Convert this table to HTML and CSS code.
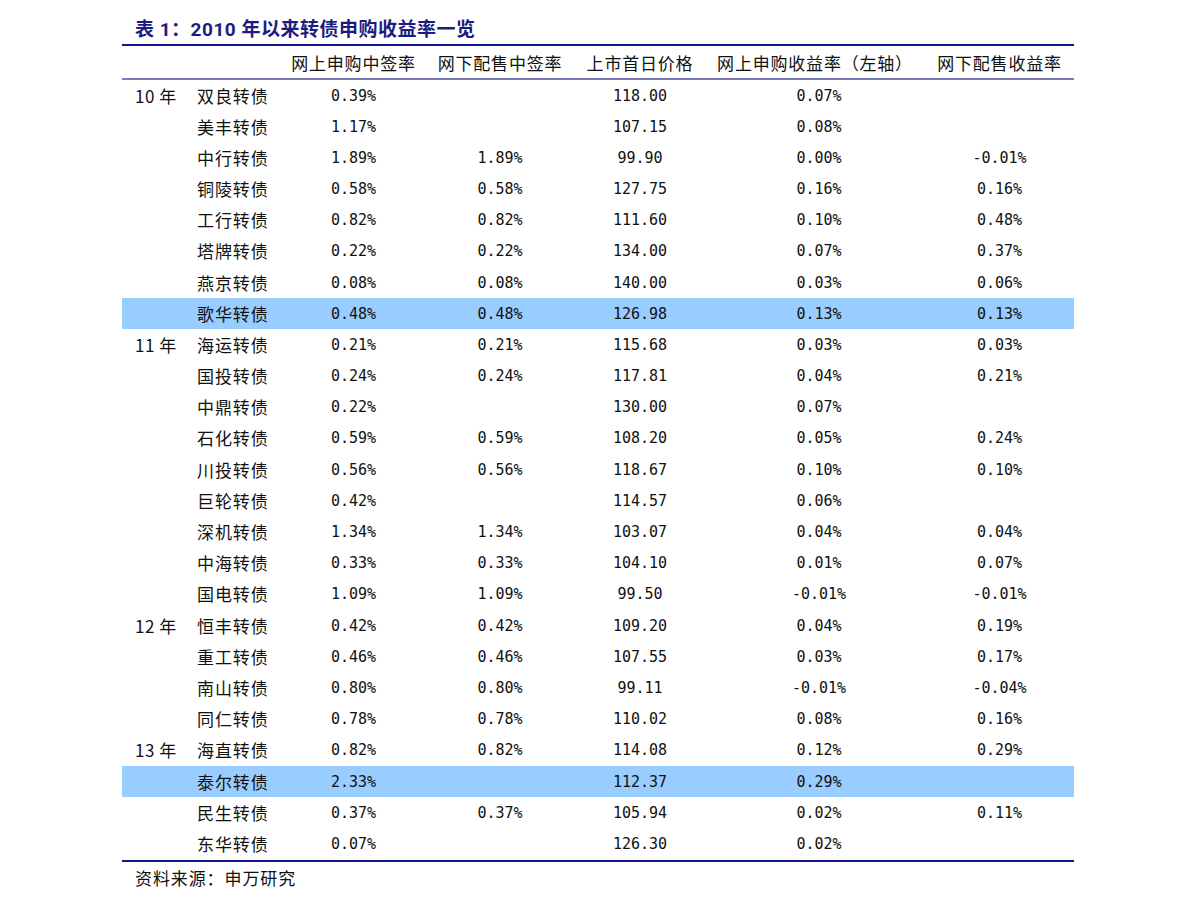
FILE: index.html
```html
<!DOCTYPE html>
<html lang="zh">
<head>
<meta charset="utf-8">
<title>表 1：2010 年以来转债申购收益率一览</title>
<link rel="stylesheet" href="styles.css">
</head>
<body>
<div class="page">
  <div class="title">表 1：2010 年以来转债申购收益率一览</div>
  <table class="data">
    <colgroup>
      <col class="c-year"><col class="c-name"><col class="c-1"><col class="c-2"><col class="c-3"><col class="c-4"><col class="c-5">
    </colgroup>
    <thead>
      <tr>
        <th></th><th></th>
        <th>网上申购中签率</th>
        <th>网下配售中签率</th>
        <th>上市首日价格</th>
        <th>网上申购收益率（左轴）</th>
        <th>网下配售收益率</th>
      </tr>
    </thead>
    <tbody>
      <tr><td class="yr">10 年</td><td class="nm">双良转债</td><td class="num">0.39%</td><td class="num"></td><td class="num">118.00</td><td class="num n4">0.07%</td><td class="num"></td></tr>
      <tr><td class="yr"></td><td class="nm">美丰转债</td><td class="num">1.17%</td><td class="num"></td><td class="num">107.15</td><td class="num n4">0.08%</td><td class="num"></td></tr>
      <tr><td class="yr"></td><td class="nm">中行转债</td><td class="num">1.89%</td><td class="num">1.89%</td><td class="num">99.90</td><td class="num n4">0.00%</td><td class="num">-0.01%</td></tr>
      <tr><td class="yr"></td><td class="nm">铜陵转债</td><td class="num">0.58%</td><td class="num">0.58%</td><td class="num">127.75</td><td class="num n4">0.16%</td><td class="num">0.16%</td></tr>
      <tr><td class="yr"></td><td class="nm">工行转债</td><td class="num">0.82%</td><td class="num">0.82%</td><td class="num">111.60</td><td class="num n4">0.10%</td><td class="num">0.48%</td></tr>
      <tr><td class="yr"></td><td class="nm">塔牌转债</td><td class="num">0.22%</td><td class="num">0.22%</td><td class="num">134.00</td><td class="num n4">0.07%</td><td class="num">0.37%</td></tr>
      <tr><td class="yr"></td><td class="nm">燕京转债</td><td class="num">0.08%</td><td class="num">0.08%</td><td class="num">140.00</td><td class="num n4">0.03%</td><td class="num">0.06%</td></tr>
      <tr class="hl"><td class="yr"></td><td class="nm">歌华转债</td><td class="num">0.48%</td><td class="num">0.48%</td><td class="num">126.98</td><td class="num n4">0.13%</td><td class="num">0.13%</td></tr>
      <tr><td class="yr">11 年</td><td class="nm">海运转债</td><td class="num">0.21%</td><td class="num">0.21%</td><td class="num">115.68</td><td class="num n4">0.03%</td><td class="num">0.03%</td></tr>
      <tr><td class="yr"></td><td class="nm">国投转债</td><td class="num">0.24%</td><td class="num">0.24%</td><td class="num">117.81</td><td class="num n4">0.04%</td><td class="num">0.21%</td></tr>
      <tr><td class="yr"></td><td class="nm">中鼎转债</td><td class="num">0.22%</td><td class="num"></td><td class="num">130.00</td><td class="num n4">0.07%</td><td class="num"></td></tr>
      <tr><td class="yr"></td><td class="nm">石化转债</td><td class="num">0.59%</td><td class="num">0.59%</td><td class="num">108.20</td><td class="num n4">0.05%</td><td class="num">0.24%</td></tr>
      <tr><td class="yr"></td><td class="nm">川投转债</td><td class="num">0.56%</td><td class="num">0.56%</td><td class="num">118.67</td><td class="num n4">0.10%</td><td class="num">0.10%</td></tr>
      <tr><td class="yr"></td><td class="nm">巨轮转债</td><td class="num">0.42%</td><td class="num"></td><td class="num">114.57</td><td class="num n4">0.06%</td><td class="num"></td></tr>
      <tr><td class="yr"></td><td class="nm">深机转债</td><td class="num">1.34%</td><td class="num">1.34%</td><td class="num">103.07</td><td class="num n4">0.04%</td><td class="num">0.04%</td></tr>
      <tr><td class="yr"></td><td class="nm">中海转债</td><td class="num">0.33%</td><td class="num">0.33%</td><td class="num">104.10</td><td class="num n4">0.01%</td><td class="num">0.07%</td></tr>
      <tr><td class="yr"></td><td class="nm">国电转债</td><td class="num">1.09%</td><td class="num">1.09%</td><td class="num">99.50</td><td class="num n4">-0.01%</td><td class="num">-0.01%</td></tr>
      <tr><td class="yr">12 年</td><td class="nm">恒丰转债</td><td class="num">0.42%</td><td class="num">0.42%</td><td class="num">109.20</td><td class="num n4">0.04%</td><td class="num">0.19%</td></tr>
      <tr><td class="yr"></td><td class="nm">重工转债</td><td class="num">0.46%</td><td class="num">0.46%</td><td class="num">107.55</td><td class="num n4">0.03%</td><td class="num">0.17%</td></tr>
      <tr><td class="yr"></td><td class="nm">南山转债</td><td class="num">0.80%</td><td class="num">0.80%</td><td class="num">99.11</td><td class="num n4">-0.01%</td><td class="num">-0.04%</td></tr>
      <tr><td class="yr"></td><td class="nm">同仁转债</td><td class="num">0.78%</td><td class="num">0.78%</td><td class="num">110.02</td><td class="num n4">0.08%</td><td class="num">0.16%</td></tr>
      <tr><td class="yr">13 年</td><td class="nm">海直转债</td><td class="num">0.82%</td><td class="num">0.82%</td><td class="num">114.08</td><td class="num n4">0.12%</td><td class="num">0.29%</td></tr>
      <tr class="hl"><td class="yr"></td><td class="nm">泰尔转债</td><td class="num">2.33%</td><td class="num"></td><td class="num">112.37</td><td class="num n4">0.29%</td><td class="num"></td></tr>
      <tr><td class="yr"></td><td class="nm">民生转债</td><td class="num">0.37%</td><td class="num">0.37%</td><td class="num">105.94</td><td class="num n4">0.02%</td><td class="num">0.11%</td></tr>
      <tr><td class="yr"></td><td class="nm">东华转债</td><td class="num">0.07%</td><td class="num"></td><td class="num">126.30</td><td class="num n4">0.02%</td><td class="num"></td></tr>
    </tbody>
  </table>
  <div class="source">资料来源：申万研究</div>
</div>
</body>
</html>
```

FILE: styles.css
```css
html, body {
  margin: 0;
  padding: 0;
  background: #ffffff;
}

.page {
  width: 952px;
  margin-left: 122px;
  font-family: "Noto Sans CJK SC", "Noto Sans", "DejaVu Sans", sans-serif;
  color: #111111;
}

.title {
  height: 44px;
  box-sizing: border-box;
  padding-top: 19px;
  padding-left: 13px;
  line-height: 22px;
  font-family: Roboto, "Noto Sans CJK SC", sans-serif;
  font-size: 19px;
  font-weight: bold;
  color: #1c1c80;
  letter-spacing: 0.5px;
}

.data {
  width: 952px;
  border-collapse: collapse;
  table-layout: fixed;
  border-top: 2px solid #14148a;
  border-bottom: 2px solid #14148a;
}

.c-year { width: 63px; }
.c-name { width: 97px; }
.c-1 { width: 143px; }
.c-2 { width: 150px; }
.c-3 { width: 130px; }
.c-4 { width: 220px; }
.c-5 { width: 149px; }

.data th {
  height: 32px;
  padding: 0;
  font-size: 17px;
  font-weight: normal;
  letter-spacing: 0.8px;
  text-align: center;
  white-space: nowrap;
  border-bottom: 2px solid #7a7ab8;
  color: #111111;
}

.data td {
  height: 31.2px;
  padding: 0;
  white-space: nowrap;
  line-height: 20px;
}

.data tbody tr:first-child td {
  height: 31px;
}

.yr {
  padding-left: 13px !important;
  font-size: 17px;
  letter-spacing: 0.5px;
}

.nm {
  font-size: 17px;
  letter-spacing: 0.9px;
  padding-left: 12px !important;
}

.num {
  font-family: "DejaVu Sans Mono", "Liberation Mono", monospace;
  font-size: 15px;
  text-align: center;
}

.n4 {
  padding-left: 8px !important;
}

.hl td {
  background: #99ccff;
}

.source {
  padding-top: 5px;
  padding-left: 13px;
  font-size: 17px;
  line-height: 22px;
  letter-spacing: 0.9px;
  color: #111111;
}
```
